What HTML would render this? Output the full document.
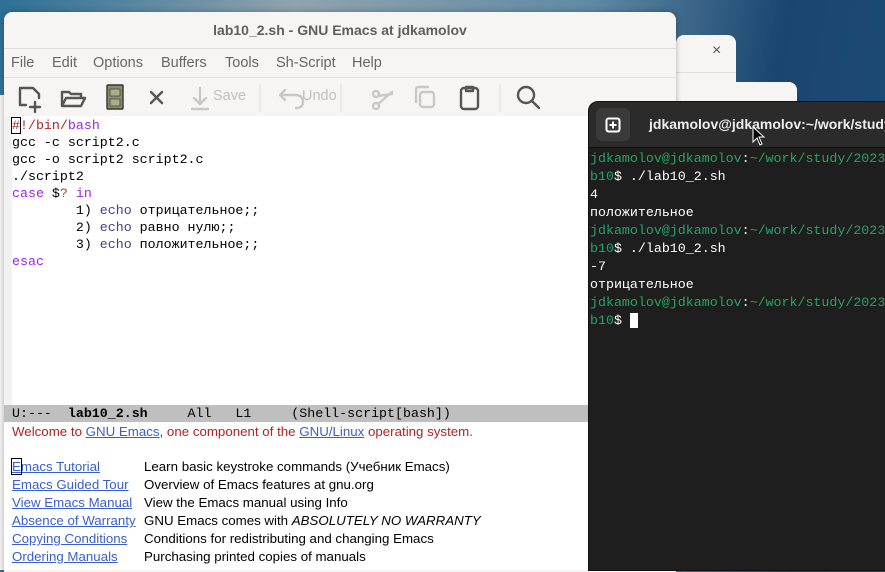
<!DOCTYPE html>
<html><head><meta charset="utf-8"><style>
*{margin:0;padding:0;box-sizing:border-box}
body{width:885px;height:570px;overflow:hidden;position:relative;font-family:"Liberation Sans","DejaVu Sans",sans-serif;background:linear-gradient(100deg,#2d6f95 0%,#8fa3ad 30%,#5f8aa4 60%,#1a4570 80%,#1e4d78 100%)}
.abs{position:absolute}
.mono{font-family:"Liberation Mono","DejaVu Sans Mono",monospace;font-size:13.3px}
.win{background:#f6f5f4;border-radius:8px 8px 0 0}
.code div{height:17px;line-height:17px;white-space:pre}
.kw{color:#a020f0}.cm{color:#b22222}
.term div{height:18px;line-height:18px;white-space:pre;color:#fff}
.g{color:#26a269}
.wl div{height:18px;line-height:18px;font-size:13.3px;white-space:pre}
.wl a{color:#3a5fcd;text-decoration:underline}
.menu span{position:absolute;top:0}
</style></head><body>
<div class="abs" style="left:0;top:95px;width:6px;height:475px;background:#f6f5f4"></div>
<div class="abs win" style="left:676px;top:35px;width:60px;height:260px"></div>
<div class="abs" style="left:676px;top:72px;width:60px;height:1px;background:#ddd"></div>
<div class="abs" style="left:712px;top:42px;font-size:16px;color:#555">×</div>
<div class="abs win" style="left:676px;top:82px;width:121px;height:40px"></div>
<!-- emacs window -->
<div class="abs win" style="left:4px;top:12px;width:672px;height:560px;box-shadow:0 0 6px rgba(0,0,0,.3)">
  <div style="height:36px;text-align:center;line-height:36px;font-weight:bold;font-size:14px;color:#5e5e5e">lab10_2.sh - GNU Emacs at jdkamolov</div>
  <div class="menu" style="position:relative;height:30px;line-height:28px;font-size:14.5px;color:#666;border-top:1px solid #e0dedb;border-bottom:1px solid #e0dedb">
    <span style="left:7px">File</span><span style="left:48px">Edit</span><span style="left:89px">Options</span><span style="left:157px">Buffers</span><span style="left:221px">Tools</span><span style="left:272px">Sh-Script</span><span style="left:348px">Help</span>
  </div>
</div>
<svg class="abs" style="left:0;top:78px" width="580" height="38" fill="none" stroke-linecap="round" stroke-linejoin="round">
 <g stroke="#555" stroke-width="2.4">
  <path d="M26 27 H20 V10 H33 L39 16 V20"/><path d="M35 24 V34 M30 29 H40"/>
  <path d="M62 28 V14 H69 L71 16 H81 V20 M62 28 L66 20 H85 L81 28 Z"/>
 </g>
 <rect x="107" y="7" width="16" height="24" fill="#8a8f6a" stroke="#333" stroke-width="1.4" rx="1"/>
 <rect x="110" y="11" width="10" height="7" fill="#a9ae86" stroke="#444" stroke-width=".8"/>
 <rect x="110" y="21" width="10" height="7" fill="#a9ae86" stroke="#444" stroke-width=".8"/>
 <path d="M151 14 L162 25 M162 14 L151 25" stroke="#555" stroke-width="2.4"/>
 <g stroke="#c8c8c8" stroke-width="2.4">
  <path d="M200 10 V25 M194 20 L200 26 L206 20 M192 31 H208"/>
  <path d="M280 17 H295 Q303 17 303 24 Q303 30 296 30 M285 12 L280 17 L285 22"/>
  <circle cx="376" cy="16" r="3"/><circle cx="376" cy="28" r="3"/><path d="M378 18 L392 16 M378 26 L392 14"/>
  <rect x="420" y="14" width="14" height="15" rx="3"/><path d="M416 24 V12 Q416 9 419 9 H428"/>
 </g>
 <g stroke="#555" stroke-width="2.4">
  <rect x="461" y="10" width="17" height="21" rx="3"/><path d="M466 9 H473 V13 H466 Z"/>
  <circle cx="526" cy="17" r="8"/><path d="M532 23 L539 30"/>
 </g>
 <path d="M260 6 V34 M341 6 V34 M500 6 V34" stroke="#ddd" stroke-width="1"/>
</svg>
<div class="abs" style="left:213px;top:88px;font-size:14.5px;color:#c0c0c0">Save</div>
<div class="abs" style="left:302px;top:88px;font-size:14.5px;color:#c0c0c0">Undo</div>
<div class="abs" style="left:4px;top:116px;width:584px;height:454px;background:#fff"></div>
<div class="abs" style="left:4px;top:116px;width:8px;height:290px;background:#f2f2f2"></div>
<div class="abs mono code" style="left:12px;top:117px;color:#000">
<div><span class="cm" style="outline:1px solid #000">#</span><span class="cm">!/bin/</span><span class="kw">bash</span></div>
<div>gcc -c script2.c</div>
<div>gcc -o script2 script2.c</div>
<div>./script2</div>
<div><span class="kw">case</span> $<span style="color:#a0522d">?</span> <span class="kw">in</span></div>
<div>        1) <span style="color:#483d8b">echo</span> отрицательное;;</div>
<div>        2) <span style="color:#483d8b">echo</span> равно нулю;;</div>
<div>        3) <span style="color:#483d8b">echo</span> положительное;;</div>
<div><span class="kw">esac</span></div>
</div>
<div class="abs mono" style="left:4px;top:405px;width:584px;height:17px;line-height:17px;background:#bfbfbf;white-space:pre;padding-left:8px;color:#000">U:---  <b>lab10_2.sh</b>     All   L1     (Shell-script[bash])</div>
<div class="abs" style="left:12px;top:424px;font-size:13.3px;color:#b22222;white-space:pre">Welcome to <a style="color:#3a5fcd;text-decoration:underline">GNU Emacs</a>, one component of the <a style="color:#3a5fcd;text-decoration:underline">GNU/Linux</a> operating system.</div>
<div class="abs wl" style="left:12px;top:458px">
<div><a><span style="outline:1px solid #000">E</span>macs Tutorial</a></div>
<div><a>Emacs Guided Tour</a></div>
<div><a>View Emacs Manual</a></div>
<div><a>Absence of Warranty</a></div>
<div><a>Copying Conditions</a></div>
<div><a>Ordering Manuals</a></div>
</div>
<div class="abs wl" style="left:144px;top:458px;color:#000">
<div>Learn basic keystroke commands (Учебник Emacs)</div>
<div>Overview of Emacs features at gnu.org</div>
<div>View the Emacs manual using Info</div>
<div>GNU Emacs comes with <i>ABSOLUTELY NO WARRANTY</i></div>
<div>Conditions for redistributing and changing Emacs</div>
<div>Purchasing printed copies of manuals</div>
</div>
<div class="abs" style="left:588px;top:101px;width:300px;height:470px;background:#1e1e1e;border-radius:10px 0 0 0;border:1px solid #111"></div>
<div class="abs" style="left:589px;top:102px;width:296px;height:46px;background:#2b2b2b;border-radius:10px 0 0 0;border-bottom:1px solid #111"></div>
<div class="abs" style="left:596px;top:108px;width:34px;height:33px;background:#3a3a3a;border-radius:6px"></div>
<svg class="abs" style="left:605px;top:117px" width="16" height="16"><rect x="1.5" y="1.5" width="13" height="13" rx="2" fill="none" stroke="#fff" stroke-width="2"/><path d="M8 4.5 V11.5 M4.5 8 H11.5" stroke="#fff" stroke-width="2"/></svg>
<div class="abs" style="left:649px;top:116px;font-size:14px;font-weight:bold;color:#eee;white-space:nowrap">jdkamolov@jdkamolov:~/work/study</div>
<svg class="abs" style="left:752px;top:126px" width="14" height="22"><path d="M1 1 L1 16 L5 12 L8 19 L10 18 L7 11 L12 11 Z" fill="#000" stroke="#fff" stroke-width="1"/></svg>
<div class="abs mono term" style="left:590px;top:150px">
<div><span class="g">jdkamolov@jdkamolov</span>:<span class="g">~/work/study/2023</span></div>
<div><span class="g">b10</span>$ ./lab10_2.sh</div>
<div>4</div>
<div>положительное</div>
<div><span class="g">jdkamolov@jdkamolov</span>:<span class="g">~/work/study/2023</span></div>
<div><span class="g">b10</span>$ ./lab10_2.sh</div>
<div>-7</div>
<div>отрицательное</div>
<div><span class="g">jdkamolov@jdkamolov</span>:<span class="g">~/work/study/2023</span></div>
<div><span class="g">b10</span>$ <span style="background:#fff">&nbsp;</span></div>
</div>
</body></html>
